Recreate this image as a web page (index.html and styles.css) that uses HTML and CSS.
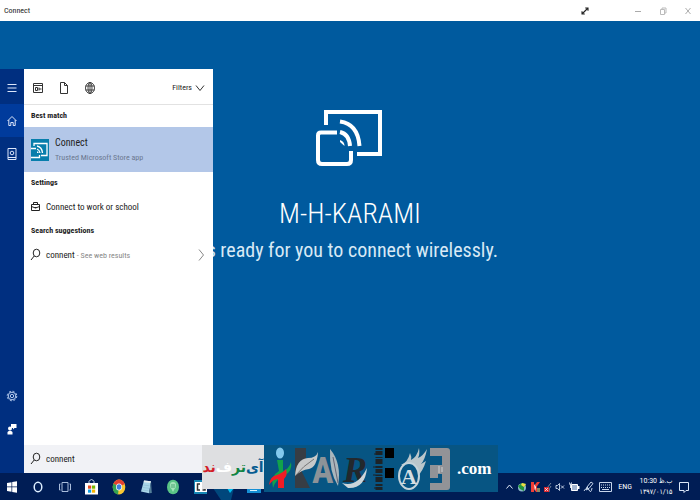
FILE: index.html
```html
<!DOCTYPE html>
<html lang="en">
<head>
<meta charset="utf-8">
<title>Connect</title>
<link rel="stylesheet" href="styles.css">
</head>
<body>
<header class="titlebar">
  <span class="titlebar-name">Connect</span>
  <button class="win-btn expand" aria-label="Full screen"><svg width="8" height="8" viewBox="0 0 8 8"><path d="M1.500 6.500l5-5M4.200 1h2.800v2.800M1 4.200v2.800h2.800" fill="none" stroke="#222" stroke-width="1.100"/></svg></button>
  <button class="win-btn" aria-label="Minimize"><svg width="8" height="8" viewBox="0 0 8 8"><path d="M1 4.500h6" stroke="#aaa"/></svg></button>
  <button class="win-btn" aria-label="Restore"><svg width="8" height="8" viewBox="0 0 8 8"><path d="M1.500 2.500h4v5h-4zM3 2.500v-1.500h4v5H5.500" fill="none" stroke="#bbb"/></svg></button>
  <button class="win-btn" aria-label="Close"><svg width="8" height="8" viewBox="0 0 8 8"><path d="M1.500 1l5 6M6.500 1l-5 6" stroke="#999" stroke-width=".8"/></svg></button>
</header>

<main class="stage">
  <section class="hero">
    <svg class="hero-icon" width="68" height="60" viewBox="0 0 68 60" fill="none" stroke="#fff" stroke-width="4">
      <path d="M10 17V4H64V46H41"/>
      <path d="M21 24.500H5q-3 0-3 3V52q0 4 4 4H31q4 0 4-4V43"/>
      <path d="M24 13.500Q42 16 43.500 38M24 24Q33 26 34 38"/>
      <path d="M24 32q4.500 1.500 4.500 6l-4.500-4z" fill="#fff" stroke="none"/>
    </svg>
    <h1>M-H-KARAMI</h1>
    <p>is ready for you to connect wirelessly.</p>
  </section>

  <aside class="search-panel">
    <nav class="rail">
      <button aria-label="Menu"><svg width="12" height="12" viewBox="0 0 12 12"><path d="M1.500 2.500h9M1.500 6h9M1.500 9.500h9" stroke="#dce6fa"/></svg></button>
      <button class="active" aria-label="Home"><svg width="12" height="12" viewBox="0 0 12 12"><path d="M1.500 6L6 1.500 10.500 6M2.800 5v5.500h2V7.500h2.400v3h2V5" fill="none" stroke="#dce6fa"/></svg></button>
      <button aria-label="Notebook"><svg width="12" height="14" viewBox="0 0 12 14"><path d="M2 1.500h8v11H2zM2 10.500h8" fill="none" stroke="#dce6fa"/><circle cx="6" cy="6" r="1.800" fill="none" stroke="#dce6fa"/></svg></button>
      <span class="spacer"></span>
      <button aria-label="Settings"><svg width="12" height="14" viewBox="0 0 12 14" fill="none" stroke="#b5cbed"><circle cx="6" cy="7" r="3.800"/><circle cx="6" cy="7" r="1.700"/><circle cx="6" cy="7" r="4.800" stroke-dasharray="2 1.770"/></svg></button>
      <button aria-label="Feedback"><svg width="12" height="14" viewBox="0 0 12 14" fill="#fff"><path d="M5 2h5.500v4H8.500L7 7.500V6H5z"/><circle cx="4" cy="6.500" r="2"/><path d="M1.500 12.500V10q2.500-2.500 5 0v2.500z"/></svg></button>
    </nav>

    <div class="results">
      <div class="scopes">
        <button aria-label="Apps"><svg width="12" height="12" viewBox="0 0 12 12" fill="none" stroke="#333"><path d="M1.500 1.500h9v9h-9zM1.500 3.500h9M3.500 5.500h2v3h-2zM7 7h2.500M7 5.500v3"/></svg></button>
        <button aria-label="Documents"><svg width="12" height="14" viewBox="0 0 12 14" fill="none" stroke="#333"><path d="M2.500 1.500h4l3 3v8h-7zM6.500 1.500v3h3"/></svg></button>
        <button aria-label="Web"><svg width="12" height="14" viewBox="0 0 12 14" fill="none" stroke="#333" stroke-width=".9"><ellipse cx="6" cy="7" rx="4.500" ry="5.500"/><ellipse cx="6" cy="7" rx="2" ry="5.500"/><path d="M6 1.500v11M1.500 5h9M1.500 9h9"/></svg></button>
        <button class="filters">Filters <svg width="10" height="8" viewBox="0 0 10 8"><path d="M1 1.500l4 5 4-5" fill="none" stroke="#333"/></svg></button>
      </div>

      <h2>Best match</h2>
      <a class="best" href="#">
        <svg width="18" height="22" viewBox="0 0 18 22"><path d="M0 0h18v22H0z" fill="#087eac"/><g fill="none" stroke="#fff" stroke-width="1.300"><path d="M3 7V4.500h13v12h-6"/><path d="M5 9.500H0M0 18.500h8.500V16M6 7q5 1 5.500 7M6 10q2.500 1 3 4"/></g><path d="M6 12l2 2H6z" fill="#fff"/></svg>
        <span class="best-text"><strong>Connect</strong><small>Trusted Microsoft Store app</small></span>
      </a>

      <h2>Settings</h2>
      <a class="row" href="#">
        <svg width="11" height="12" viewBox="0 0 11 12" fill="none" stroke="#222"><path d="M1.500 3.500h8v6h-8zM3.500 3.500v-2h4v2M1.500 5.500l4 1.500 4-1.500M4.500 6.500h2"/></svg>
        <span>Connect to work or school</span>
      </a>

      <h2>Search suggestions</h2>
      <a class="row" href="#">
        <svg width="11" height="14" viewBox="0 0 11 14" fill="none" stroke="#222"><ellipse cx="6.500" cy="5" rx="3.300" ry="3.800"/><path d="M4.200 8L1 12"/></svg>
        <span>connent <small>- See web results</small></span>
        <svg class="more" width="8" height="14" viewBox="0 0 8 14"><path d="M2 1.500L6.500 7 2 12.500" fill="none" stroke="#888"/></svg>
      </a>

      <label class="search-box">
        <svg width="11" height="14" viewBox="0 0 11 14" fill="none" stroke="#222"><ellipse cx="6.500" cy="5" rx="3.300" ry="3.800"/><path d="M4.200 8L1 12"/></svg>
        <input type="text" value="connent" aria-label="Search">
      </label>
    </div>
  </aside>
</main>

<footer class="taskbar">
  <div class="apps">
    <button class="start" aria-label="Start"><svg width="12" height="14" viewBox="0 0 12 14" fill="#fff"><path d="M1 3l4.500-.8v4.300H1zM6.200 2L11 1.200v5.300H6.200zM1 7.300h4.500v4.500L1 11zM6.200 7.300H11v5.500l-4.800-.9z"/></svg></button>
    <button aria-label="Cortana"><svg width="12" height="14" viewBox="0 0 12 14"><ellipse cx="6" cy="7" rx="3.800" ry="4.800" fill="none" stroke="#dceeff" stroke-width="1.500"/></svg></button>
    <button aria-label="Task view"><svg width="14" height="14" viewBox="0 0 14 14" fill="none" stroke="#a9bddc"><path d="M4 2.500h6v9H4zM2.500 4h-1v6h1M11.500 4h1v6h-1"/></svg></button>
    <button aria-label="Store"><svg width="15" height="18" viewBox="0 0 15 18"><path d="M5 5V3.500q2.500-4 5 0V5" fill="none" stroke="#cde"/><path d="M1 5h13v11.500H1z" fill="#fff"/><path d="M4 7.500h3.200v3.200H4z" fill="#e64b22"/><path d="M8 7.500h3.200v3.200H8z" fill="#75b700"/><path d="M4 11.500h3.200v3.200H4z" fill="#139ee0"/><path d="M8 11.500h3.200v3.200H8z" fill="#f8b500"/></svg></button>
    <button aria-label="Chrome"><svg width="14" height="16" viewBox="0 0 14 16"><ellipse cx="7" cy="8" rx="6.300" ry="7.500" fill="#f8c732"/><path d="M7 8L1.300 4.500Q4 .5 7 .5q4 0 5.800 4.500z" fill="#e44132"/><path d="M7 8l-1 7.400Q1 15 .7 8q0-2 .8-3.500z" fill="#35a352"/><ellipse cx="7" cy="8" rx="3" ry="3.600" fill="#fff"/><ellipse cx="7" cy="8" rx="2.300" ry="2.800" fill="#3f7fe0"/></svg></button>
    <button aria-label="Notepad"><svg width="14" height="16" viewBox="0 0 14 16"><path d="M5 1.500l7 .8-2 12-8-1.800z" fill="#a9d5e8"/><path d="M5 1.500l7 .8-.3 1.700-7-.8z" fill="#e6edf0"/><path d="M12 2.300l.8 11.700-2.800.3z" fill="#547f99"/><path d="M4.500 6l6 .8M4 8.500l6 .8M3.300 11l6 .8" stroke="#8fbdd2" stroke-width=".7"/></svg></button>
    <button aria-label="Green app"><svg width="14" height="16" viewBox="0 0 14 16"><ellipse cx="7" cy="8" rx="6" ry="7.300" fill="#5ac486"/><path d="M4 6q0-3 3-3t3 3-1.500 4L7 13l-1.500-3Q4 9 4 6z" fill="#a5e4ba"/><path d="M5 6h4M5 8h4" stroke="#4ba775"/></svg></button>
    <button aria-label="Connect app"><svg width="14" height="16" viewBox="0 0 14 16"><path d="M1 1h13v14H1z" fill="#1687b5"/><path d="M2 3h12v10H2z" fill="#fff"/><path d="M7 5H4.500v6H7M9.500 5H12v6H9.500" fill="none" stroke="#333" stroke-width="1.500"/></svg></button>
    <button class="running" aria-label="Running app"><svg width="27" height="27" viewBox="0 0 27 27"><path d="M0 15h27v12H8z" fill="#00477c"/><path d="M14 15h7l-4 5z" fill="#00bdf0"/><path d="M21 15h6v12h-9z" fill="#001d55"/></svg></button>
    <button class="open" aria-label="Connect window"><svg width="14" height="18" viewBox="0 0 14 18"><path d="M0 6h14v9H0z" fill="#168fd4"/><path d="M3 12.500h7" stroke="#d8f4ff"/></svg></button>
  </div>
  <div class="tray">
    <svg width="9" height="14" viewBox="0 0 9 14"><path d="M1.500 8.500l3-3.500 3 3.500" fill="none" stroke="#dfe8f6"/></svg>
    <svg width="10" height="14" viewBox="0 0 10 14"><circle cx="5" cy="7.500" r="4" fill="#8db8c9"/><path d="M1 6l4-3 4 1-2 3v4L3 9z" fill="#22973c"/><path d="M5 3l4 1-2 3-3-2z" fill="#f2dd45"/></svg>
    <svg width="10" height="14" viewBox="0 0 10 14"><path d="M1 2h3v4l3-4h3L6.500 7l3 5H6L4 9v3H1z" fill="#ef3d35"/><path d="M4 4l2 3-1 4z" fill="#fff"/><path d="M7 8h3v4H7z" fill="#8c8661"/></svg>
    <svg width="9" height="14" viewBox="0 0 9 14"><path d="M4 12q0-6 4-9M6 12q0-4 2-6" stroke="#78899f" fill="none"/><path d="M1 7h5v5H1z" fill="#d92a32"/><path d="M2 8l3 3M5 8l-3 3" stroke="#fff" stroke-width=".7"/></svg>
    <svg width="10" height="14" viewBox="0 0 10 14" fill="none" stroke="#d2deef"><path d="M1 5.500h1.500l2-2v7l-2-2H1zM6 5.500l3 3M9 5.500l-3 3" stroke-width=".9"/></svg>
    <svg width="12" height="14" viewBox="0 0 12 14"><path d="M3.500 4.500h6v6h-6z" fill="#a3b5d0" stroke="#fff"/><path d="M10 6h1.500v3H10z" fill="#fff"/><path d="M1 4h3M1.500 2.500v1M3.500 2.500v1M2.500 4v4" stroke="#d7e2f0"/></svg>
    <svg width="12" height="14" viewBox="0 0 12 14" fill="none" stroke="#c7d6ec"><path d="M3 10l1-3 4-5 2 1.500-4 5zM4 7l2 2M1 11q3-5 5-1t3-2"/></svg>
    <svg width="15" height="14" viewBox="0 0 15 14" fill="none" stroke="#c7d6ec"><path d="M1.500 2.500h12v9h-12z"/><path d="M3 5h9M3 7.500h9" stroke-dasharray="1 1"/><path d="M4 9.500h7"/></svg>
    <span class="lang">ENG</span>
    <time class="clock" dir="rtl"><span>ب.ظ 10:30</span><span>۱۳۹۷/۰۱/۱۵</span></time>
    <svg width="12" height="14" viewBox="0 0 12 14"><path d="M1.500 2.500h9v8H8L6 12.500V10.500H1.500z" fill="none" stroke="#dce8f8"/></svg>
  </div>
</footer>

<div class="watermark">
  <div class="badge" lang="fa" dir="rtl"><span class="blue">آی</span> <span class="green">تر</span><span class="white">ف</span><span class="red">ند</span></div>
  <div class="brand">
    <svg width="188" height="47" viewBox="0 0 188 47">
      <ellipse cx="16" cy="8" rx="4" ry="5.500" fill="#83c8ed"/>
      <path d="M13 15h6v11q6-2 8-9 2 9-7 14-9 4-11 12-3-12 6-17z" fill="#12a24a"/>
      <path d="M5 40q1-9 8-10 7-3 9-6 2 6-2 10v9h-6v-9q-5 0-9 6z" fill="#f01c25"/>
      <path d="M31 3h11v13l-6 7 10 20H31z" fill="#373d44"/>
      <path d="M31 31q1-17 13-18 8 0 10-6-1 15-9 17-8 1-14 7z" fill="#c7c9c9"/>
      <path d="M31 31q8-10 19-17" fill="none" stroke="#777"/>
      <text class="letter-a" x="48" y="38">A</text>
      <path d="M66 4q12 14 8 37-9-14-8-37z" fill="#aab6bc"/>
      <path d="M69 12l5 26" stroke="#667"/>
      <text class="letter-r" x="79" y="37">R</text>
      <path d="M78 38q15 5 25-15-2 21-19 20z" fill="#ccd5da"/>
      <path d="M115 3v42" stroke="#1d2327" stroke-width="7" stroke-dasharray="2 1 4 2 1 1 5 2"/>
      <path d="M110 9h8M109 22h9M109 30h9M110 43h8" stroke="#1d2327"/>
      <path d="M121 3h9v10h-9zM121 23h9v10h-9z" fill="#000"/>
      <path d="M137 20q7-3 9-12 2 4 1 7 6-3 8-12 1 6-1 10 5-2 9-9-2 11-6 15l5-3q-3 10-9 16-2-12-16-12z" fill="#bac6cb"/>
      <ellipse cx="145" cy="31" rx="10" ry="13" fill="#075583" stroke="#c5d3da" stroke-width="2"/>
      <text class="letter-a2" x="137" y="39">A</text>
      <path d="M166 3h17q3 0 3 3v36q0 3-3 3h-17v-7h12v-9h-4v4h-8V20h12v-9h-12z" fill="#929397"/>
      <path d="M175 21v7M178 22v5" stroke="#d1d1d1"/>
    </svg>
    <span class="domain">.com</span>
  </div>
</div>
</body>
</html>
```
FILE: styles.css
```css
* { box-sizing: border-box; }
body {
  margin: 0;
  height: 100vh;
  display: flex;
  flex-direction: column;
  overflow: hidden;
  position: relative;
  font-family: "Roboto Condensed", Roboto, sans-serif;
  font-size: 9px;
  color: #222;
  background: #005a9e;
}
button { border: 0; padding: 0; background: none; font: inherit; color: inherit; display: flex; align-items: center; justify-content: center; }
a { color: inherit; text-decoration: none; }
svg { display: block; flex: none; }
h1, h2, p { margin: 0; font-weight: normal; }

.titlebar { display: flex; align-items: center; height: 21px; flex: none; background: #fff; padding: 0 0 0 4px; font-size: 8px; }
.titlebar-name { flex: 1; }
.win-btn { width: 25px; height: 20px; }
.expand { margin-right: 28px; }

.stage { flex: 1; position: relative; min-height: 0; background: #005a9e; }
.hero { display: flex; flex-direction: column; align-items: center; padding-top: 87px; color: #fff; font-weight: 300; }
.hero h1 { font-size: 28px; line-height: 36px; margin-top: 28px; font-weight: 300; }
.hero p { font-size: 20px; line-height: 36px; color: #d8e9f5; }

.search-panel { position: absolute; left: 0; top: 48px; bottom: 0; width: 213px; display: flex; background: #fff; }
.rail { width: 24px; flex: none; display: flex; flex-direction: column; background: #002f80; padding: 2px 0 28px; }
.rail button { height: 33px; }
.rail .active { background: #003b9c; }
.spacer { flex: 1; }

.results { flex: 1; display: flex; flex-direction: column; min-width: 0; }
.scopes { display: flex; align-items: center; height: 36px; padding: 2px 8px 0 8px; gap: 14px; border-bottom: 1px solid #e2e2e2; }
.filters { margin-left: auto; gap: 3px; font-size: 8px; }
.results h2 { font-size: 8px; line-height: 22px; font-weight: bold; padding-left: 7px; }
.best { display: flex; align-items: center; gap: 6px; height: 45px; padding-left: 7px; background: #b3c7e8; }
.best-text { display: flex; flex-direction: column; }
.best-text strong { font-weight: normal; font-size: 10px; line-height: 16px; }
.best-text small { font-size: 8px; line-height: 14px; color: #6c7890; }
.row { display: flex; align-items: center; gap: 5px; height: 26px; padding: 0 8px 0 6px; }
.row small { font-size: 8px; color: #888; }
.more { margin-left: auto; }
.search-box { margin-top: auto; height: 28px; display: flex; align-items: center; gap: 5px; padding: 0 6px; background: #f1f2f6; }
.search-box input { flex: 1; min-width: 0; border: 0; padding: 0; background: none; outline: none; font: inherit; color: inherit; }

.taskbar { flex: none; height: 27px; display: flex; justify-content: space-between; background: #001d55; color: #fff; }
.apps { display: flex; }
.apps button { width: 27px; }
.apps .start { width: 24px; }
.tray { display: flex; align-items: center; gap: 3px; padding-right: 10px; font-size: 8px; }
.lang { padding: 0 2px; }
.clock { width: 38px; display: flex; flex-direction: column; align-items: center; font-family: Roboto, "DejaVu Sans Condensed", sans-serif; font-size: 7px; line-height: 11px; white-space: nowrap; }

.watermark { position: absolute; left: 202px; bottom: 8px; display: flex; align-items: flex-start; }
.badge { width: 62px; height: 44px; background: #dedfe1; display: flex; align-items: center; justify-content: center; font-family: "DejaVu Sans", sans-serif; font-size: 14px; font-weight: bold; white-space: pre; }
.blue { color: #075c91; }
.green { color: #118442; }
.white { color: #fff; }
.red { color: #d31d29; }
.brand { display: flex; align-items: center; gap: 5px; width: 234px; height: 47px; background: #075583; }
.domain { font-family: "Liberation Serif", serif; font-weight: bold; font-size: 17px; color: #fff; }
.letter-a { font: bold 36px "Roboto Condensed", sans-serif; fill: #8d9398; }
.letter-r { font: italic bold 36px "Liberation Serif", serif; fill: #23282d; }
.letter-a2 { font: bold 22px "Liberation Serif", serif; fill: #d5dee2; }
```
